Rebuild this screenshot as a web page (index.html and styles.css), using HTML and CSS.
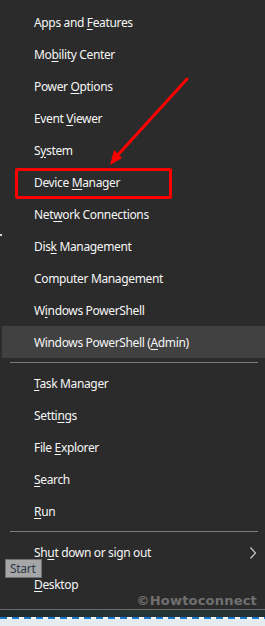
FILE: index.html
```html
<!DOCTYPE html>
<html lang="en">
    <head>
        <meta charset="UTF-8">
        <title>Quick Link Menu</title>
        <link rel="stylesheet" href="styles.css">
    </head>
    <body>
        <div class="screen">
            <div class="menu">
                <ul class="group">
                    <li class="item">Apps and <u>F</u>eatures</li>
                    <li class="item">Mo<u>b</u>ility Center</li>
                    <li class="item">Power <u>O</u>ptions</li>
                    <li class="item">Event <u>V</u>iewer</li>
                    <li class="item">S<u>y</u>stem</li>
                    <li class="item">Device <u>M</u>anager</li>
                    <li class="item">Net<u>w</u>ork Connections</li>
                    <li class="item">Dis<u>k</u> Management</li>
                    <li class="item">Computer Mana<u>g</u>ement</li>
                    <li class="item">W<u>i</u>ndows PowerShell</li>
                    <li class="item item-hover">Windows PowerShell (<u>A</u>dmin)</li>
                </ul>
                <hr class="sep">
                <ul class="group">
                    <li class="item"><u>T</u>ask Manager</li>
                    <li class="item">Setti<u>n</u>gs</li>
                    <li class="item">File <u>E</u>xplorer</li>
                    <li class="item"><u>S</u>earch</li>
                    <li class="item"><u>R</u>un</li>
                </ul>
                <hr class="sep">
                <ul class="group">
                    <li class="item item-sub">
                        <span>Sh<u>u</u>t down or sign out</span>
                        <svg class="chevron" width="8" height="12" viewBox="0 0 8 12">
                            <polyline points="1.5,0.5 6.5,6 1.5,11.5" fill="none" stroke="#c9c9c9" stroke-width="1.2"/>
                        </svg>
                    </li>
                    <li class="item"><u>D</u>esktop</li>
                </ul>

                <!-- annotation layer -->
                <div class="highlight-box"></div>
                <svg class="arrow" width="265" height="200" viewBox="0 0 265 200">
                    <line x1="187" y1="79" x2="116" y2="157" stroke="#ff0000" stroke-width="3" stroke-linecap="round"/>
                    <polygon points="110,165 122,158 114,150" fill="#ff0000"/>
                </svg>
                <div class="tooltip">Start</div>
                <div class="watermark">©Howtoconnect</div>
                <div class="dot"></div>
            </div>
            <div class="taskbar">
                <div class="taskbar-strip"></div>
                <div class="taskbar-dash"></div>
                <div class="taskbar-light"></div>
            </div>
        </div>
    </body>
</html>
```

FILE: styles.css
```css
* {
    margin: 0;
    padding: 0;
    box-sizing: border-box;
}

body {
    background: #2b2b2b;
    font-family: 'Noto Sans', 'Open Sans', sans-serif;
    width: 265px;
    height: 626px;
    overflow: hidden;
}

.screen {
    display: flex;
    flex-direction: column;
    height: 626px;
}

.menu {
    position: relative;
    background: #2b2b2b;
    padding: 6px 0 9px 2px;
    border-bottom: 1px solid #6b6b6b;
}

.group {
    list-style: none;
}

.item {
    height: 32px;
    line-height: 30px;
    padding: 2px 0 0 32px;
    color: #f6f6f6;
    font-size: 12px;
    letter-spacing: -0.35px;
    white-space: nowrap;
}

.item u {
    text-underline-offset: 2px;
}

.item-hover {
    background: #414141;
}

.item-sub {
    display: flex;
    align-items: center;
    justify-content: space-between;
    padding-right: 8px;
}

.chevron {
    display: block;
}

.sep {
    border: none;
    height: 1px;
    background: #7c7c7c;
    margin: 4px 7px 4px 8px;
}

.highlight-box {
    position: absolute;
    left: 15px;
    top: 168px;
    width: 157px;
    height: 31px;
    border: 3px solid #ff0000;
    border-radius: 2px;
}

.arrow {
    position: absolute;
    left: 0;
    top: 0;
}

.tooltip {
    position: absolute;
    left: 5px;
    top: 559px;
    width: 37px;
    height: 19px;
    background: #a6a6a6;
    border: 1px solid #717171;
    color: #2e3a48;
    font-size: 12px;
    letter-spacing: -0.3px;
    line-height: 17px;
    padding-left: 4px;
}

.watermark {
    position: absolute;
    right: 8px;
    bottom: 1px;
    font-family: 'DejaVu Sans', sans-serif;
    font-weight: bold;
    font-size: 13px;
    color: #707070;
    letter-spacing: 0.2px;
}

.dot {
    position: absolute;
    left: 0;
    top: 234px;
    width: 2px;
    height: 2px;
    background: #d8d8d8;
}

.taskbar {
    flex: 1;
    display: flex;
    flex-direction: column;
}

.taskbar-strip {
    height: 7px;
    background: linear-gradient(90deg, #202a2a, #263535 50%, #243232);
}

.taskbar-dash {
    height: 2px;
    background: repeating-linear-gradient(90deg, #1a78d0 0 7px, #f2f6fa 7px 12px);
}

.taskbar-light {
    flex: 1;
    background: #e6ebf0;
}
```
